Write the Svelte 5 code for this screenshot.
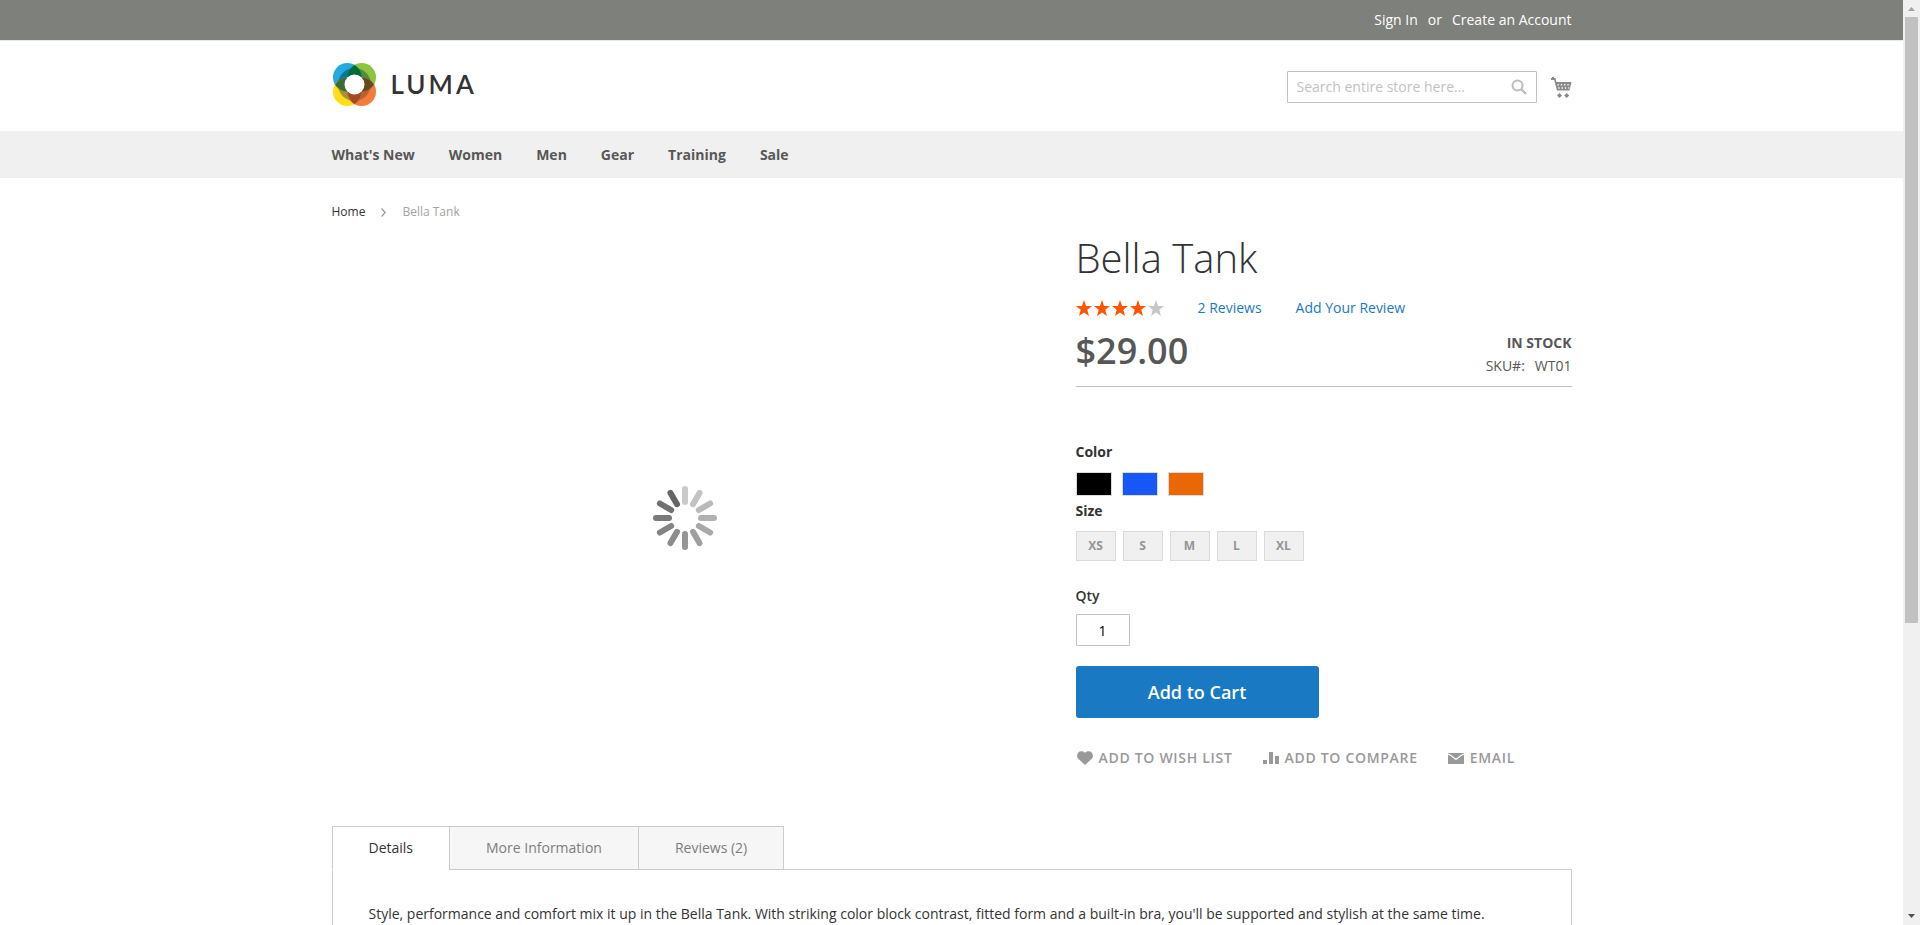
<script>
  const menu = ["What's New", 'Women', 'Men', 'Gear', 'Training', 'Sale'];
  const colors = [
    { name: 'Black', value: '#000000' },
    { name: 'Blue', value: '#1857f7' },
    { name: 'Orange', value: '#eb6703' }
  ];
  const sizes = ['XS', 'S', 'M', 'L', 'XL'];
  const tabs = ['Details', 'More Information', 'Reviews (2)'];
  const spokes = [
    '#cacaca', '#c3c3c3', '#bababa', '#b1b1b1', '#a8a8a8', '#9f9f9f',
    '#969696', '#8d8d8d', '#848484', '#7a7a7a', '#707070', '#656565'
  ];
  let active = $state(0);
  let qty = $state('1');
</script>

<div class="window">
  <div class="page">
    <div class="panel">
      <div class="container account">
        <a href="#signin">Sign In</a><span>or</span><a href="#create">Create an Account</a>
      </div>
    </div>

    <header class="container header">
      <a class="logo" href="#home" aria-label="Luma">
        <svg width="43" height="43" viewBox="-21.5 -21.5 43 43" aria-hidden="true">
          <circle cx="-7.2" cy="-7.2" r="14.3" fill="#26a9e0" />
          <circle cx="7.2" cy="-7.2" r="14.3" fill="#8cc63e" />
          <circle cx="-7.2" cy="7.2" r="14.3" fill="#ffde17" />
          <circle cx="7.2" cy="7.2" r="14.3" fill="#f47b3c" />
          <g stroke-width=".5">
            <path d="M0 0V-16.5A16.5 16.5 0 0 0 -16.5 0Z" fill="#0a769f" stroke="#2b93b5" />
            <path d="M0 0V-16.5A16.5 16.5 0 0 1 16.5 0Z" fill="#568a3c" stroke="#76a558" />
            <path d="M0 0V16.5A16.5 16.5 0 0 1 -16.5 0Z" fill="#a8942e" stroke="#c2ac4c" />
            <path d="M0 0V16.5A16.5 16.5 0 0 0 16.5 0Z" fill="#c05e2d" stroke="#d98258" />
            <path d="M0 -19.5A14.3 14.3 0 0 1 0 5.1A14.3 14.3 0 0 1 0 -19.5Z" fill="#006b38" stroke="#1e8550" />
            <path d="M0 19.5A14.3 14.3 0 0 1 0 -5.1A14.3 14.3 0 0 1 0 19.5Z" fill="#a04b23" stroke="#bb6c40" />
            <path d="M-19.5 0A14.3 14.3 0 0 1 5.1 0A14.3 14.3 0 0 1 -19.5 0Z" fill="#3c6c34" stroke="#64884e" />
            <path d="M19.5 0A14.3 14.3 0 0 1 -5.1 0A14.3 14.3 0 0 1 19.5 0Z" fill="#66491f" stroke="#8b6c40" />
          </g>
          <circle r="10" fill="#fff" />
        </svg>
        <span>LUMA</span>
      </a>
      <div class="tools">
        <form class="search" role="search">
          <input type="text" aria-label="Search" placeholder="Search entire store here..." />
          <button type="button" aria-label="Search">
            <svg width="16" height="16" viewBox="0 0 16 16" fill="none" stroke="#bdbdbd" stroke-width="2">
              <circle cx="6.5" cy="6.5" r="5" /><path d="M10 10l5 5" stroke-width="2.4" />
            </svg>
          </button>
        </form>
        <a class="cart" href="#cart" aria-label="My Cart">
          <svg width="21" height="21" viewBox="0 0 21 21" fill="#8a8a8a">
            <path d="M1 0h2v1h1.500l.8 4H20.500l-2 8.500H6L3.200 3H0V1h1z" />
            <path d="M6.500 7.700h13" stroke="#fff" stroke-width="1.400" stroke-dasharray="1.300 2" />
            <path d="M7.300 11h11" stroke="#fff" stroke-width="1.600" stroke-dasharray="1.300 2" />
            <path d="M8.500 16l2.500 2.500L8.500 21L6 18.500zM15.700 16l2.500 2.500L15.700 21l-2.500-2.500z" />
          </svg>
        </a>
      </div>
    </header>

    <nav class="nav" aria-label="Main">
      <div class="container menu">
        {#each menu as item}<a href="#menu">{item}</a>{/each}
      </div>
    </nav>

    <div class="container crumbs">
      <a href="#home">Home</a>
      <svg width="5" height="9" viewBox="0 0 5 9" fill="none" stroke="#999" stroke-width="1.300" aria-hidden="true"><path d="M.5 .5l3.700 4l-3.700 4" /></svg>
      <span>Bella Tank</span>
    </div>

    <main class="container">
      <div class="product">
        <div class="media">
          <svg class="spinner" width="64" height="64" viewBox="-32 -32 64 64" role="img" aria-label="Loading">
            {#each spokes as shade, i}
              <rect x="-3" y="-32" width="6" height="19" rx="3" fill={shade} transform="rotate({i * 30})" />
            {/each}
          </svg>
        </div>

        <section class="info">
          <h1>Bella Tank</h1>
          <div class="rating">
            <div class="stars" role="img" aria-label="4 out of 5 stars">
              {#each [1, 2, 3, 4, 5] as n}
                <svg width="16" height="16" viewBox="0 0 16 16" class:off={n > 4}>
                  <path d="M8 0l2.100 5.900 5.900.1-4.700 3.700L13 16l-5-3.600L3 16l1.700-6.300L0 6l5.900-.1z" />
                </svg>
              {/each}
            </div>
            <a href="#reviews">2 Reviews</a>
            <a href="#add-review">Add Your Review</a>
          </div>
          <div class="summary">
            <span class="price">$29.00</span>
            <div class="stock">
              <strong>IN STOCK</strong>
              <div class="sku"><span>SKU#:</span><span>WT01</span></div>
            </div>
          </div>

          <h2>Color</h2>
          <div class="colors">
            {#each colors as c}
              <button type="button" aria-label={c.name} style="background:{c.value}"></button>
            {/each}
          </div>
          <h2 class="size-title">Size</h2>
          <div class="sizes">
            {#each sizes as s}<button type="button">{s}</button>{/each}
          </div>

          <form class="cart-form">
            <label for="qty">Qty</label>
            <input id="qty" type="text" bind:value={qty} />
            <button type="button" class="primary">Add to Cart</button>
          </form>

          <div class="actions">
            <a href="#wishlist">
              <svg width="16" height="14" viewBox="0 0 16 14"><path d="M8 14L1 7.500C-2 3 3-2.500 8 1.800C13-2.500 18 3 15 7.500z" /></svg>
              <span>Add to Wish List</span>
            </a>
            <a href="#compare">
              <svg width="16" height="14" viewBox="0 0 16 14"><path d="M0 9h4v4H0zM6 1h4v12H6zM12 5h4v8h-4z" /></svg>
              <span>Add to Compare</span>
            </a>
            <a href="#email">
              <svg width="16" height="14" viewBox="0 0 16 14">
                <path d="M0 2h16v11H0z" /><path d="M0 3l3 1.500L8 8.500l5-4L16 3" fill="none" stroke="#fff" stroke-width="1.300" />
              </svg>
              <span>Email</span>
            </a>
          </div>
        </section>
      </div>

      <section class="details">
        <div class="tabs" role="tablist">
          {#each tabs as tab, i}
            <button type="button" role="tab" aria-selected={active === i} class:active={active === i} onclick={() => (active = i)}>{tab}</button>
          {/each}
        </div>
        <div class="tab-body" role="tabpanel">
          Style, performance and comfort mix it up in the Bella Tank. With striking color block contrast, fitted form and a built-in bra, you'll be supported and stylish at the same time.
        </div>
      </section>
    </main>
  </div>

  <div class="scrollbar" aria-hidden="true">
    <svg width="17" height="17" viewBox="0 0 17 17"><path d="M5 11L8.500 7L12 11z" fill="#a3a3a3" /></svg>
    <div class="track"><div class="thumb"></div></div>
    <svg width="17" height="17" viewBox="0 0 17 17"><path d="M5 6L8.500 10L12 6z" fill="#505050" /></svg>
  </div>
</div>

<style>
  :global(body) {
    margin: 0;
    background: #fff;
  }
  * {
    box-sizing: border-box;
  }
  .window {
    display: flex;
    height: 100vh;
    overflow: hidden;
    font: 400 14px/20px 'Open Sans', sans-serif;
    color: #333;
  }
  .page {
    flex: 1;
    min-width: 0;
    overflow: hidden;
  }
  a {
    color: inherit;
    text-decoration: none;
  }
  button,
  input {
    font: inherit;
    margin: 0;
    padding: 0;
  }
  svg {
    display: block;
    flex: none;
  }
  .container {
    max-width: 1280px;
    margin: 0 auto;
    padding: 0 20px;
  }

  .panel {
    background: #7e807b;
    color: #fff;
    border-bottom: 1px solid #e8e8e8;
  }
  .account {
    display: flex;
    justify-content: flex-end;
    gap: 10px;
    padding-top: 10px;
    padding-bottom: 10px;
  }

  .header {
    display: flex;
    justify-content: space-between;
    align-items: flex-start;
    padding-top: 22px;
    padding-bottom: 25px;
  }
  .logo {
    display: flex;
    align-items: center;
    gap: 15px;
    padding-left: 1px;
    font: 600 26px/43px Lato, sans-serif;
    letter-spacing: 3px;
  }
  .tools {
    display: flex;
    align-items: center;
    gap: 14px;
    padding-top: 8px;
  }
  .search {
    display: flex;
    align-items: center;
    width: 250px;
    height: 32px;
    padding: 0 9px;
    border: 1px solid #c2c2c2;
    border-radius: 1px;
  }
  .search input {
    flex: 1;
    min-width: 0;
    border: 0;
    outline: 0;
    background: none;
  }
  .search input::placeholder {
    color: #c2c2c2;
    opacity: 1;
  }
  .search button {
    border: 0;
    background: none;
  }

  .nav {
    background: #f0f0f0;
  }
  .menu {
    display: flex;
    gap: 34px;
    padding-top: 14px;
    padding-bottom: 13px;
    font-weight: 700;
    color: #575757;
  }

  .crumbs {
    display: flex;
    align-items: center;
    gap: 16px;
    padding-top: 26px;
    padding-bottom: 16px;
    font-size: 12px;
    line-height: 16px;
  }
  .crumbs span {
    color: #a3a3a3;
  }

  .product {
    display: flex;
    justify-content: space-between;
  }
  .media {
    display: flex;
    align-items: center;
    justify-content: center;
    width: 57%;
    padding-bottom: 26px;
  }
  .info {
    width: 40%;
    padding-bottom: 58px;
  }
  h1 {
    margin: 0 0 18px;
    font-size: 40px;
    font-weight: 300;
    line-height: 44px;
  }
  .rating {
    display: flex;
    align-items: center;
    gap: 34px;
    margin-bottom: 15px;
    color: #1979c3;
  }
  .stars {
    display: flex;
    gap: 2px;
    fill: #ff5501;
  }
  .stars .off {
    fill: #c7c7c7;
  }
  .summary {
    display: flex;
    justify-content: space-between;
    height: 54px;
    margin-bottom: 55px;
    border-bottom: 1px solid #c1c1c1;
    color: #575757;
  }
  .price {
    font-size: 36px;
    font-weight: 600;
    line-height: 36px;
  }
  .stock {
    text-align: right;
  }
  .stock strong {
    font-weight: 700;
  }
  .sku {
    display: flex;
    justify-content: flex-end;
    gap: 10px;
    margin-top: 3px;
  }

  h2 {
    margin: 0 0 10px;
    font-size: 14px;
    font-weight: 700;
    line-height: 20px;
  }
  .colors {
    display: flex;
    gap: 10px;
  }
  .colors button {
    width: 36px;
    height: 24px;
    border: 1px solid #dadada;
  }
  .size-title {
    margin-top: 5px;
  }
  .sizes {
    display: flex;
    gap: 7px;
    margin-bottom: 25px;
  }
  .sizes button {
    width: 40px;
    height: 30px;
    border: 1px solid #dadada;
    background: #f0f0f0;
    color: #949494;
    font-size: 12px;
    font-weight: 700;
  }
  .cart-form {
    display: flex;
    flex-direction: column;
    align-items: flex-start;
  }
  .cart-form label {
    margin-bottom: 8px;
    font-weight: 600;
  }
  .cart-form input {
    width: 54px;
    height: 32px;
    margin-bottom: 20px;
    border: 1px solid #c2c2c2;
    border-radius: 1px;
    text-align: center;
    color: #000;
  }
  .primary {
    width: 49%;
    height: 52px;
    margin-bottom: 30px;
    border: 0;
    border-radius: 3px;
    background: #1979c3;
    color: #fff;
    font-size: 18px;
    font-weight: 600;
  }
  .actions {
    display: flex;
    gap: 30px;
    padding-left: 1px;
    color: #999;
    fill: #999;
    font-weight: 600;
    letter-spacing: 0.05em;
    text-transform: uppercase;
  }
  .actions a {
    display: flex;
    align-items: center;
    gap: 6px;
  }

  .tabs {
    display: flex;
  }
  .tabs button {
    height: 44px;
    padding: 0 36px;
    border: 1px solid #ccc;
    border-right: 0;
    background: #f6f6f6;
    color: #7d7d7d;
  }
  .tabs button:last-child {
    border-right: 1px solid #ccc;
  }
  .tabs .active {
    background: #fff;
    border-bottom-color: #fff;
    color: #333;
    z-index: 1;
  }
  .tab-body {
    margin-top: -1px;
    padding: 34px 36px;
    border: 1px solid #ccc;
  }

  .scrollbar {
    display: flex;
    flex-direction: column;
    width: 17px;
    background: #f0f0f0;
  }
  .track {
    flex: 1;
    padding: 0 2px;
  }
  .thumb {
    height: 68%;
    background: #c1c1c1;
  }
</style>
